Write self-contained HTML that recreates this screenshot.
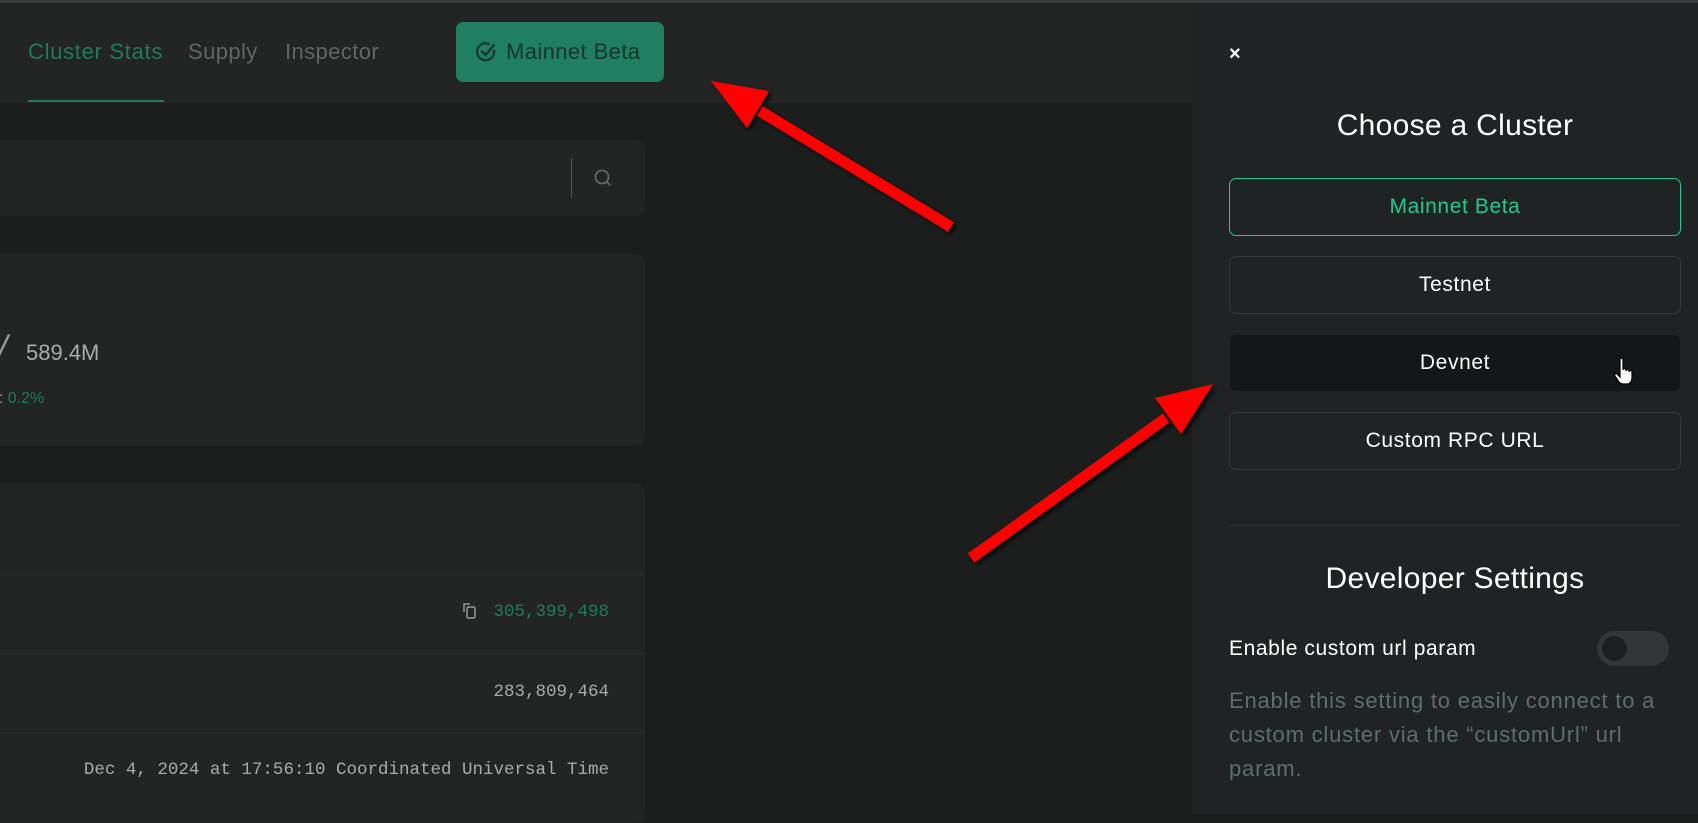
<!DOCTYPE html>
<html><head><meta charset="utf-8"><style>
*{box-sizing:border-box;margin:0;padding:0}
body{width:1698px;height:814px;overflow:hidden;background:#1c1e1e;font-family:"Liberation Sans",sans-serif;position:relative;color:#fff}
.top{position:absolute;left:0;top:0;width:1698px;height:3px;background:#3a3c3c}
.nav{position:absolute;left:0;top:3px;width:1192px;height:100px;background:#232525}
.nav span{position:absolute;top:36px;font-size:22px;color:#5f6665}
.ul{position:absolute;left:28px;top:100px;width:136px;height:2px;background:#1f7a5c}
.mb{position:absolute;left:456px;top:22px;width:208px;height:60px;background:#1f7f60;border-radius:7px;color:#17352b;font-size:22px;letter-spacing:.4px;line-height:60px;padding-left:50px;white-space:nowrap}
.card{position:absolute;left:-10px;width:655px;background:#232525;border-radius:10px}
.mono{font-family:"Liberation Mono",monospace;font-size:17.5px;position:absolute;right:1089px}
.row{position:absolute;left:0;width:655px;height:1px;background:#2a2d2d}
.side{position:absolute;left:1192px;top:3px;width:506px;height:811px;background:#1f2323}
.btn{position:absolute;left:1229px;width:452px;height:58px;border:1px solid #333838;border-radius:7px;text-align:center;line-height:56px;font-size:21px;letter-spacing:.6px;color:#fff}
.h{position:absolute;left:1229px;width:452px;text-align:center;font-size:30px;letter-spacing:.3px}
.desc{position:absolute;left:1229px;top:684px;width:440px;font-size:22px;letter-spacing:.8px;line-height:34px;color:#5b706a}
</style></head><body>
<div class="top"></div>
<div class="nav">
<span style="left:28px;color:#1f7a5c;letter-spacing:.7px">Cluster Stats</span>
<span style="left:188px;letter-spacing:.4px">Supply</span>
<span style="left:285px;letter-spacing:.4px">Inspector</span>
</div>
<div class="ul"></div>
<div class="mb"><svg style="position:absolute;left:19px;top:19px" width="22" height="22" viewBox="0 0 22 22" fill="none" stroke="#17352b" stroke-width="2.2" stroke-linecap="round"><path d="M19 9.5A8.5 8.5 0 1 1 14 3"/><path d="M7 10.5l3.5 3.5L19 4"/></svg>Mainnet Beta</div>
<div class="card" style="top:140px;height:76px"><div style="position:absolute;left:581px;top:18px;width:1px;height:40px;background:#555"></div>
<svg style="position:absolute;left:603px;top:28px" width="20" height="20" viewBox="0 0 20 20" fill="none" stroke="#666" stroke-width="1.8"><circle cx="9" cy="9" r="6.5"/><path d="M13.5 13.5l4 4"/></svg></div>
<div class="card" style="top:254px;height:192px">
<div style="position:absolute;left:8px;top:75px;font-size:34px;color:#999;transform:skewX(-12deg)">/</div>
<div style="position:absolute;left:36px;top:86px;font-size:22px;color:#aaa">589.4M</div>
<div style="position:absolute;left:0;top:136px;font-size:16px;color:#999">e: <span style="color:#1f7a5c">0.2%</span></div></div>
<div class="card" style="top:483px;height:340px"><div class="row" style="top:91px"></div><div class="row" style="top:170px"></div><div class="row" style="top:249px"></div></div>
<svg style="position:absolute;left:462px;top:602px" width="16" height="18" viewBox="0 0 16 18" fill="none" stroke="#999" stroke-width="1.5"><path d="M2 10V2h6"/><rect x="5" y="5" width="8" height="11" rx="1.5"/></svg>
<div class="mono" style="top:602px;color:#1f7a5c">305,399,498</div>
<div class="mono" style="top:682px;color:#aaa">283,809,464</div>
<div class="mono" style="top:760px;color:#aaa">Dec 4, 2024 at 17:56:10 Coordinated Universal Time</div>
<div class="side"></div>
<div style="position:absolute;left:1229px;top:43px;font-size:20px;font-weight:bold">×</div>
<div class="h" style="top:109px">Choose a Cluster</div>
<div class="btn" style="top:178px;border-color:#1ec98f;color:#21c98f">Mainnet Beta</div>
<div class="btn" style="top:256px">Testnet</div>
<div class="btn" style="top:334px;background:#141717;border-color:#222">Devnet</div>
<div class="btn" style="top:412px">Custom RPC URL</div>
<svg style="position:absolute;left:1613px;top:357px" width="22" height="30" viewBox="0 0 22 30"><path d="M7 2c1-1 3-1 3 1v10c0-2 3-2 3 0v1c0-2 3-2 3 0v1c0-2 3-2 3 0v6c0 3-2 6-5 6H10c-2 0-3-1-4-2L2 19c-1-2 1-3 2-2l3 3z" fill="#fff" stroke="#000" stroke-width="1.2"/></svg>
<div style="position:absolute;left:1229px;top:525px;width:452px;height:1px;background:#2c3131"></div>
<div class="h" style="top:562px">Developer Settings</div>
<div style="position:absolute;left:1229px;top:637px;font-size:21px;letter-spacing:.6px">Enable custom url param</div>
<div style="position:absolute;left:1597px;top:631px;width:72px;height:35px;border-radius:18px;background:#313636"><div style="position:absolute;left:5px;top:5px;width:25px;height:25px;border-radius:50%;background:#1c2020"></div></div>
<div class="desc">Enable this setting to easily connect to a custom cluster via the “customUrl” url param.</div>
<svg style="position:absolute;left:0;top:0" width="1698" height="814">
<defs><filter id="s"><feDropShadow dx="3" dy="3" stdDeviation="2" flood-color="#000" flood-opacity=".7"/></filter></defs>
<g filter="url(#s)" fill="#f00" stroke="#f00">
<line x1="951" y1="227" x2="760" y2="111" stroke-width="11"/>
<polygon points="711,81 769,91 747,128" stroke="none"/>
<line x1="971" y1="558" x2="1166" y2="418" stroke-width="11"/>
<polygon points="1213,384 1181,434 1155,398" stroke="none"/>
</g></svg>
</body></html>
